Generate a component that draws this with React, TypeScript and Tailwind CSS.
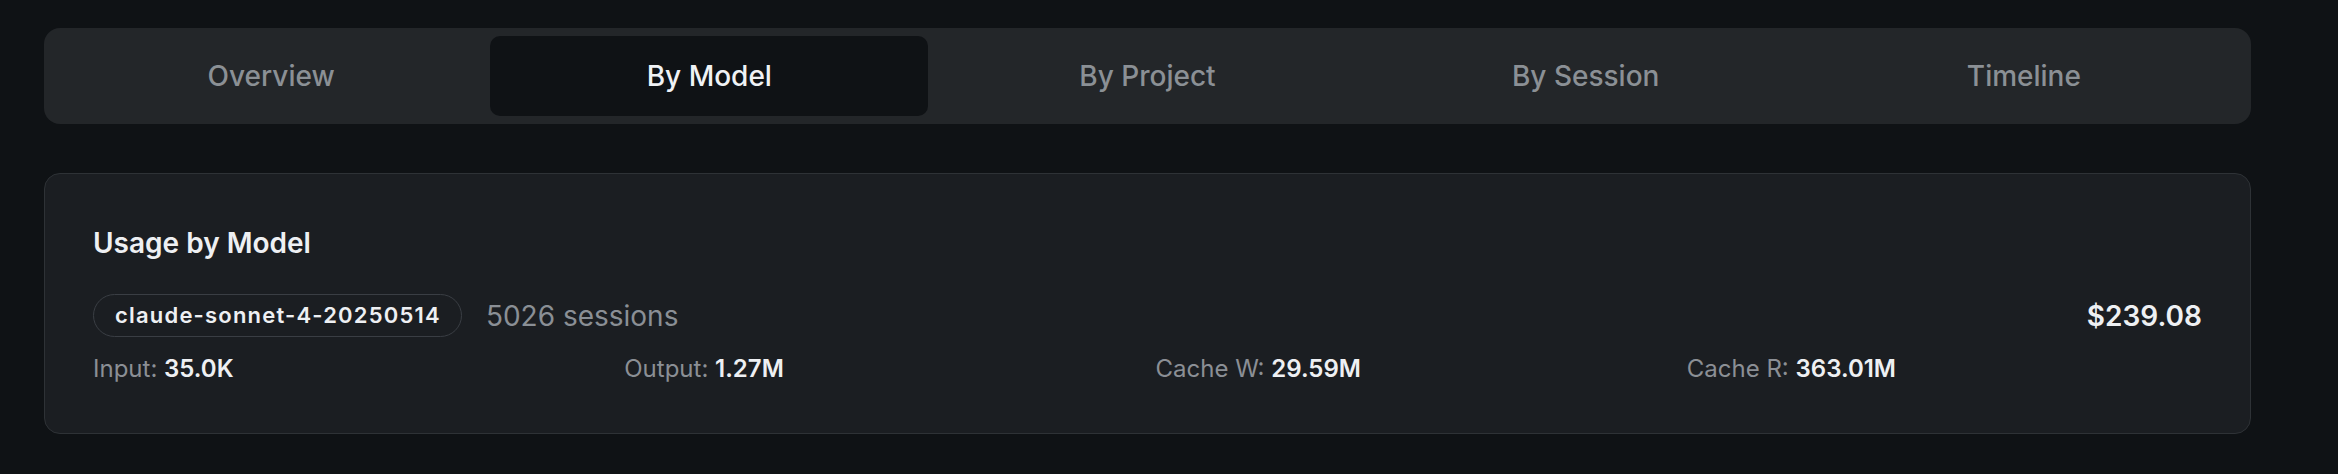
import { useState } from "react";

const tabs = ["Overview", "By Model", "By Project", "By Session", "Timeline"];

interface ModelUsage {
  model: string;
  sessions: number;
  cost: string;
  input: string;
  output: string;
  cacheWrite: string;
  cacheRead: string;
}

const models: ModelUsage[] = [
  {
    model: "claude-sonnet-4-20250514",
    sessions: 5026,
    cost: "$239.08",
    input: "35.0K",
    output: "1.27M",
    cacheWrite: "29.59M",
    cacheRead: "363.01M",
  },
];

function Stat({ label, value }: { label: string; value: string }) {
  return (
    <div className="text-[24px] leading-[33px] text-[#8b8f95]">
      {label}: <span className="font-semibold text-[#eef0f3]">{value}</span>
    </div>
  );
}

export default function App() {
  const [active, setActive] = useState("By Model");

  return (
    <div
      className="min-h-[474px] bg-[#0f1215] pl-[44px] pr-[87px] pt-[28px] pb-10"
      style={{ fontFamily: "Inter, 'Noto Sans', sans-serif" }}
    >
      {/* Tabs */}
      <div className="grid grid-cols-5 rounded-2xl bg-[#232629] p-2">
        {tabs.map((tab) => (
          <button
            key={tab}
            onClick={() => setActive(tab)}
            className={
              tab === active
                ? "h-20 rounded-[10px] bg-[#0f1215] text-[28px] font-medium text-[#f0f2f5]"
                : "h-20 rounded-[10px] text-[28px] font-medium text-[#8b9095]"
            }
          >
            {tab}
          </button>
        ))}
      </div>

      {/* Usage card */}
      <div className="mt-[49px] rounded-2xl border border-[#2e3236] bg-[#1b1e22] p-12">
        <h2 className="mb-[30px] text-[28px] leading-[42px] font-semibold text-[#eef0f3]">
          Usage by Model
        </h2>

        {models.map((m) => (
          <div key={m.model}>
            <div className="flex items-center justify-between">
              <div className="flex items-center gap-6">
                <span className="flex h-[43px] items-center rounded-full border border-[#3a3e44] pl-[21px] pr-[20px] text-[22px] font-semibold tracking-[1.2px] text-[#eef0f3]">
                  {m.model}
                </span>
                <span className="text-[28px] text-[#8a8f95]">
                  {m.sessions} sessions
                </span>
              </div>
              <span className="text-[28px] font-semibold text-[#eef0f3]">
                {m.cost}
              </span>
            </div>

            <div className="mt-[15px] grid grid-cols-4 gap-4">
              <Stat label="Input" value={m.input} />
              <Stat label="Output" value={m.output} />
              <Stat label="Cache W" value={m.cacheWrite} />
              <Stat label="Cache R" value={m.cacheRead} />
            </div>
          </div>
        ))}
      </div>
    </div>
  );
}
